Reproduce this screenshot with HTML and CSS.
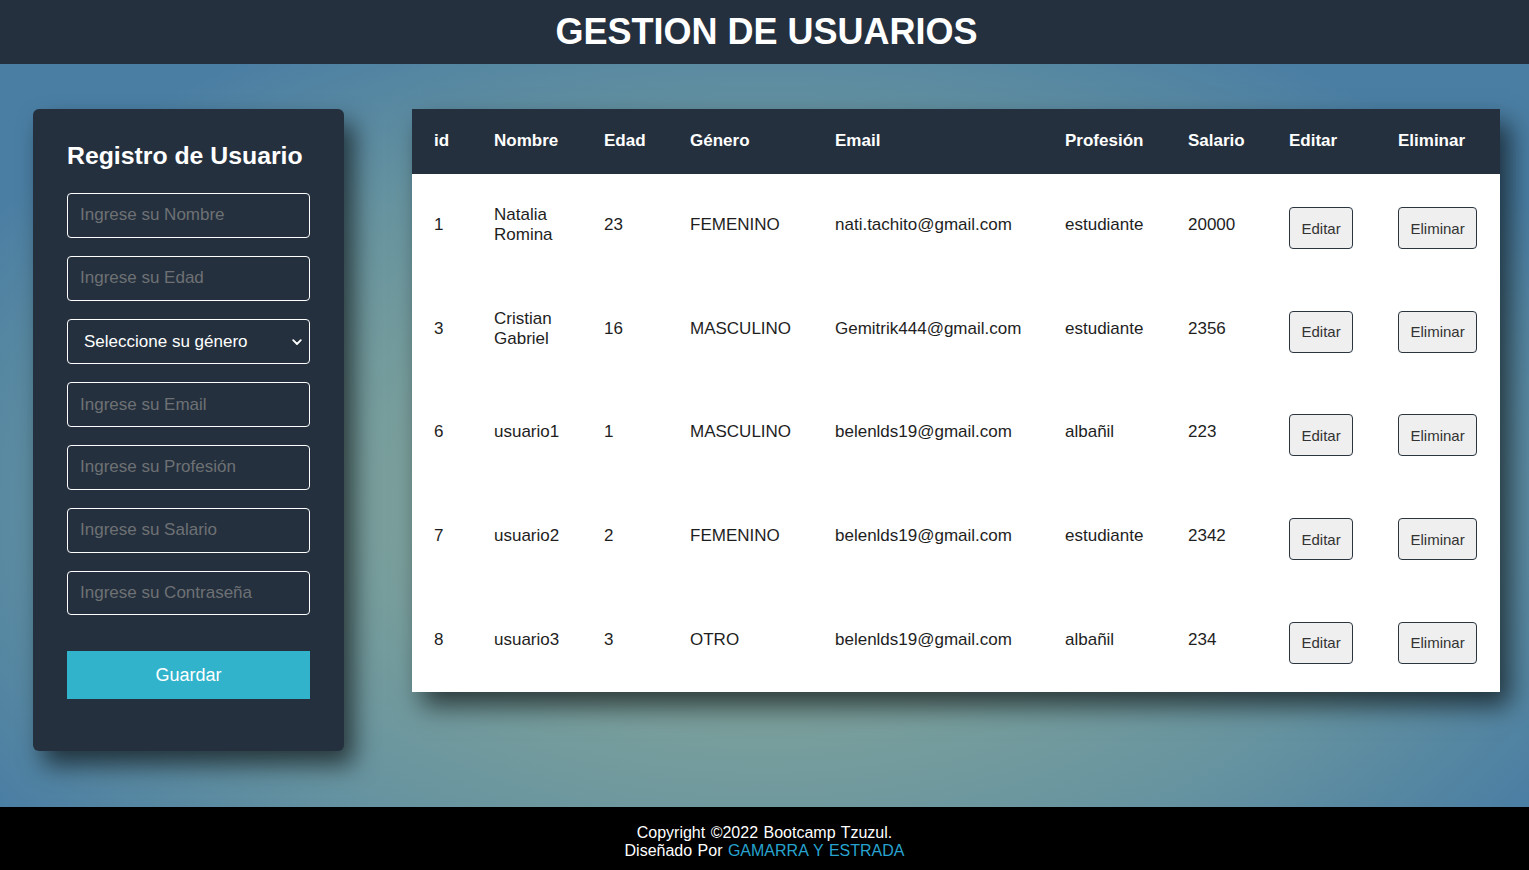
FILE: index.html
```html
<!DOCTYPE html>
<html lang="es">
<head>
<meta charset="utf-8">
<title>Gestion de Usuarios</title>
<link rel="stylesheet" href="styles.css">
</head>
<body>
<header class="topbar">
  <h1 class="topbar-title">GESTION DE USUARIOS</h1>
</header>
<main class="main">
  <section class="form-card">
    <h2 class="form-title">Registro de Usuario</h2>
    <form class="form">
      <input class="field" type="text" placeholder="Ingrese su Nombre">
      <input class="field" type="text" placeholder="Ingrese su Edad">
      <div class="select-wrap">
        <select class="field select">
          <option>Seleccione su género</option>
          <option>FEMENINO</option>
          <option>MASCULINO</option>
          <option>OTRO</option>
        </select>
        <svg class="chevron" width="10" height="7" viewBox="0 0 10 7"><polyline points="1.2,1.2 5,5 8.8,1.2" fill="none" stroke="#fff" stroke-width="1.8" stroke-linecap="round" stroke-linejoin="round"/></svg>
      </div>
      <input class="field" type="text" placeholder="Ingrese su Email">
      <input class="field" type="text" placeholder="Ingrese su Profesión">
      <input class="field" type="text" placeholder="Ingrese su Salario">
      <input class="field" type="password" placeholder="Ingrese su Contraseña">
      <button class="save" type="button">Guardar</button>
    </form>
  </section>
  <section class="table-card">
    <table class="users">
      <colgroup>
        <col class="c-id"><col class="c-nombre"><col class="c-edad"><col class="c-genero"><col class="c-email"><col class="c-prof"><col class="c-sal"><col class="c-edit"><col class="c-del">
      </colgroup>
      <thead>
        <tr><th>id</th><th>Nombre</th><th>Edad</th><th>Género</th><th>Email</th><th>Profesión</th><th>Salario</th><th>Editar</th><th>Eliminar</th></tr>
      </thead>
      <tbody>
        <tr><td>1</td><td>Natalia Romina</td><td>23</td><td>FEMENINO</td><td>nati.tachito@gmail.com</td><td>estudiante</td><td>20000</td><td><button class="act">Editar</button></td><td><button class="act">Eliminar</button></td></tr>
        <tr><td>3</td><td>Cristian Gabriel</td><td>16</td><td>MASCULINO</td><td>Gemitrik444@gmail.com</td><td>estudiante</td><td>2356</td><td><button class="act">Editar</button></td><td><button class="act">Eliminar</button></td></tr>
        <tr><td>6</td><td>usuario1</td><td>1</td><td>MASCULINO</td><td>belenlds19@gmail.com</td><td>albañil</td><td>223</td><td><button class="act">Editar</button></td><td><button class="act">Eliminar</button></td></tr>
        <tr><td>7</td><td>usuario2</td><td>2</td><td>FEMENINO</td><td>belenlds19@gmail.com</td><td>estudiante</td><td>2342</td><td><button class="act">Editar</button></td><td><button class="act">Eliminar</button></td></tr>
        <tr><td>8</td><td>usuario3</td><td>3</td><td>OTRO</td><td>belenlds19@gmail.com</td><td>albañil</td><td>234</td><td><button class="act">Editar</button></td><td><button class="act">Eliminar</button></td></tr>
      </tbody>
    </table>
  </section>
</main>
<footer class="footer">
  <p class="footer-line">Copyright ©2022 Bootcamp Tzuzul.</p>
  <p class="footer-line">Diseñado Por <a class="footer-link" href="#">GAMARRA Y ESTRADA</a></p>
</footer>
</body>
</html>
```
FILE: styles.css
```css
* { box-sizing: border-box; }
html, body { margin: 0; padding: 0; }
body {
  height: 100vh;
  display: flex;
  flex-direction: column;
  font-family: "Liberation Sans", Arial, sans-serif;
  background: radial-gradient(ellipse 60% 62% at 50% 58%, #89a99a 0%, #7a9f9c 40%, #6693a0 70%, #4a7ea3 100%);
  overflow: hidden;
}
.topbar {
  height: 64px;
  flex: none;
  background: #24303e;
  display: flex;
  align-items: center;
  justify-content: center;
}
.topbar-title {
  margin: 0;
  color: #fff;
  font-size: 36px;
  font-weight: bold;
  line-height: 40px;
  padding-left: 4px;
}
.main {
  flex: 1;
  display: flex;
  align-items: flex-start;
  gap: 68px;
  padding: 45px 29px 0 33px;
}
.form-card {
  width: 311px;
  flex: none;
  background: #24303e;
  border-radius: 6px;
  padding: 31px 34px 52px;
  box-shadow: 10px 14px 24px rgba(0, 0, 0, 0.62);
}
.form-title {
  margin: 0 0 23px;
  color: #fff;
  font-size: 24.8px;
  line-height: 29px;
  font-weight: bold;
  padding-top: 1px;
}
.form { display: flex; flex-direction: column; gap: 18px; }
.field {
  display: block;
  width: 100%;
  height: 44.8px;
  margin: 0;
  background: transparent;
  border: 1px solid #fff;
  border-radius: 4px;
  color: #fff;
  font-family: "Liberation Sans", Arial, sans-serif;
  font-size: 17px;
  padding: 0 12px;
  outline: none;
}
.field::placeholder { color: #6e7174; }
.select-wrap { position: relative; }
.select {
  appearance: none;
  -webkit-appearance: none;
  height: 45.6px;
  padding: 0 16px;
  cursor: pointer;
}
.select option { color: #000; }
.chevron {
  position: absolute;
  right: 8px;
  top: 20px;
  pointer-events: none;
}
.save {
  margin-top: 18px;
  height: 48px;
  width: 100%;
  border: none;
  background: #31b3cc;
  color: #fff;
  font-family: "Liberation Sans", Arial, sans-serif;
  font-size: 18px;
  cursor: pointer;
}
.table-card {
  flex: 1;
  background: #fff;
  box-shadow: 10px 14px 24px rgba(0, 0, 0, 0.62);
}
.users {
  width: 100%;
  border-collapse: collapse;
  table-layout: fixed;
  font-size: 17px;
  color: #1e1e1e;
}
.c-id { width: 60px; }
.c-nombre { width: 110px; }
.c-edad { width: 86px; }
.c-genero { width: 145px; }
.c-email { width: 230px; }
.c-prof { width: 123px; }
.c-sal { width: 101px; }
.c-edit { width: 109px; }
.c-del { width: 124px; }
.users th {
  background: #24303e;
  color: #fff;
  font-weight: bold;
  text-align: left;
  height: 65px;
  padding: 0 10px 2px 22px;
  line-height: 20px;
}
.users td {
  height: 103.6px;
  padding: 0 10px 1px 22px;
  line-height: 20px;
  vertical-align: middle;
}
.act {
  margin-top: 6px;
  height: 42px;
  padding: 0 11.5px;
  font-family: "Liberation Sans", Arial, sans-serif;
  font-size: 15px;
  color: #333;
  background: #efefef;
  border: 1px solid #2a3540;
  border-radius: 4px;
  cursor: pointer;
}
.footer {
  height: 63px;
  flex: none;
  background: #000;
  color: #fff;
  display: flex;
  flex-direction: column;
  justify-content: center;
  align-items: center;
  padding-top: 6px;
  font-size: 16px;
  line-height: 18px;
  word-spacing: 1px;
}
.footer-line { margin: 0; }
.footer-link { color: #27a3cf; text-decoration: none; }
```
